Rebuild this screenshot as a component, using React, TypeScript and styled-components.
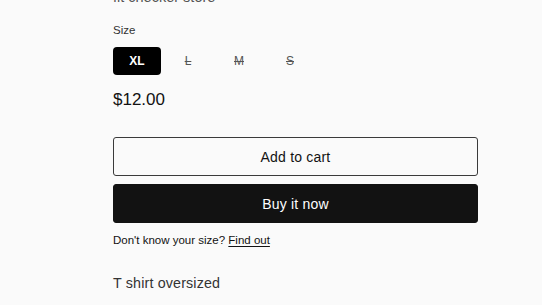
import styled, { createGlobalStyle } from "styled-components";

const GlobalStyle = createGlobalStyle`
  html, body {
    margin: 0;
    padding: 0;
    background: #fafafa;
    overflow: hidden;
  }
  body {
    font-family: "Liberation Sans", Arial, sans-serif;
    color: #121212;
  }
`;

const Page = styled.div`
  width: 542px;
  height: 305px;
  overflow: hidden;
  padding-left: 113px;
  box-sizing: border-box;
`;

const Column = styled.div`
  width: 365px;
  display: flex;
  flex-direction: column;
`;

const Vendor = styled.div`
  font-size: 14.5px;
  line-height: 18px;
  color: #555;
  margin-top: -12px;
`;

const Label = styled.div`
  font-size: 11.5px;
  line-height: 14px;
  color: #333;
  margin-top: 17px;
`;

const SizeRow = styled.div`
  display: flex;
  gap: 3px;
  margin-top: 10px;
`;

const SizeButton = styled.button<{ $active?: boolean }>`
  width: 48px;
  height: 28px;
  border: none;
  border-radius: 4px;
  padding: 0;
  font-family: inherit;
  font-size: 12px;
  font-weight: ${(p) => (p.$active ? 600 : 400)};
  background: ${(p) => (p.$active ? "#000" : "transparent")};
  color: ${(p) => (p.$active ? "#fff" : "#555")};
  text-decoration: ${(p) => (p.$active ? "none" : "line-through")};
  cursor: pointer;
`;

const Price = styled.div`
  font-size: 17px;
  line-height: 20px;
  margin-top: 15px;
  color: #121212;
`;

const CartButton = styled.button<{ $dark?: boolean }>`
  width: 100%;
  height: 39px;
  box-sizing: border-box;
  border-radius: 3px;
  border: 1px solid ${(p) => (p.$dark ? "#121212" : "#3a3a3a")};
  background: ${(p) => (p.$dark ? "#121212" : "#fafafa")};
  color: ${(p) => (p.$dark ? "#fff" : "#121212")};
  font-family: inherit;
  font-size: 14px;
  letter-spacing: 0.2px;
  padding: 0;
  cursor: pointer;
`;

const Buttons = styled.div`
  display: flex;
  flex-direction: column;
  gap: 8px;
  margin-top: 27px;
`;

const Help = styled.div`
  font-size: 11.5px;
  line-height: 14px;
  margin-top: 10px;
  color: #121212;
  a {
    color: inherit;
    text-decoration: underline;
    text-underline-offset: 2px;
  }
`;

const Description = styled.div`
  font-size: 14.3px;
  line-height: 18px;
  letter-spacing: 0.15px;
  color: #333;
  margin-top: 27px;
`;

const sizes = ["XL", "L", "M", "S"];

export default function App() {
  return (
    <Page>
      <GlobalStyle />
      <Column>
        <Vendor>fit checker store</Vendor>
        <Label>Size</Label>
        <SizeRow>
          {sizes.map((s, i) => (
            <SizeButton key={s} $active={i === 0}>
              {s}
            </SizeButton>
          ))}
        </SizeRow>
        <Price>$12.00</Price>
        <Buttons>
          <CartButton>Add to cart</CartButton>
          <CartButton $dark>Buy it now</CartButton>
        </Buttons>
        <Help>
          Don't know your size? <a href="#">Find out</a>
        </Help>
        <Description>T shirt oversized</Description>
      </Column>
    </Page>
  );
}
